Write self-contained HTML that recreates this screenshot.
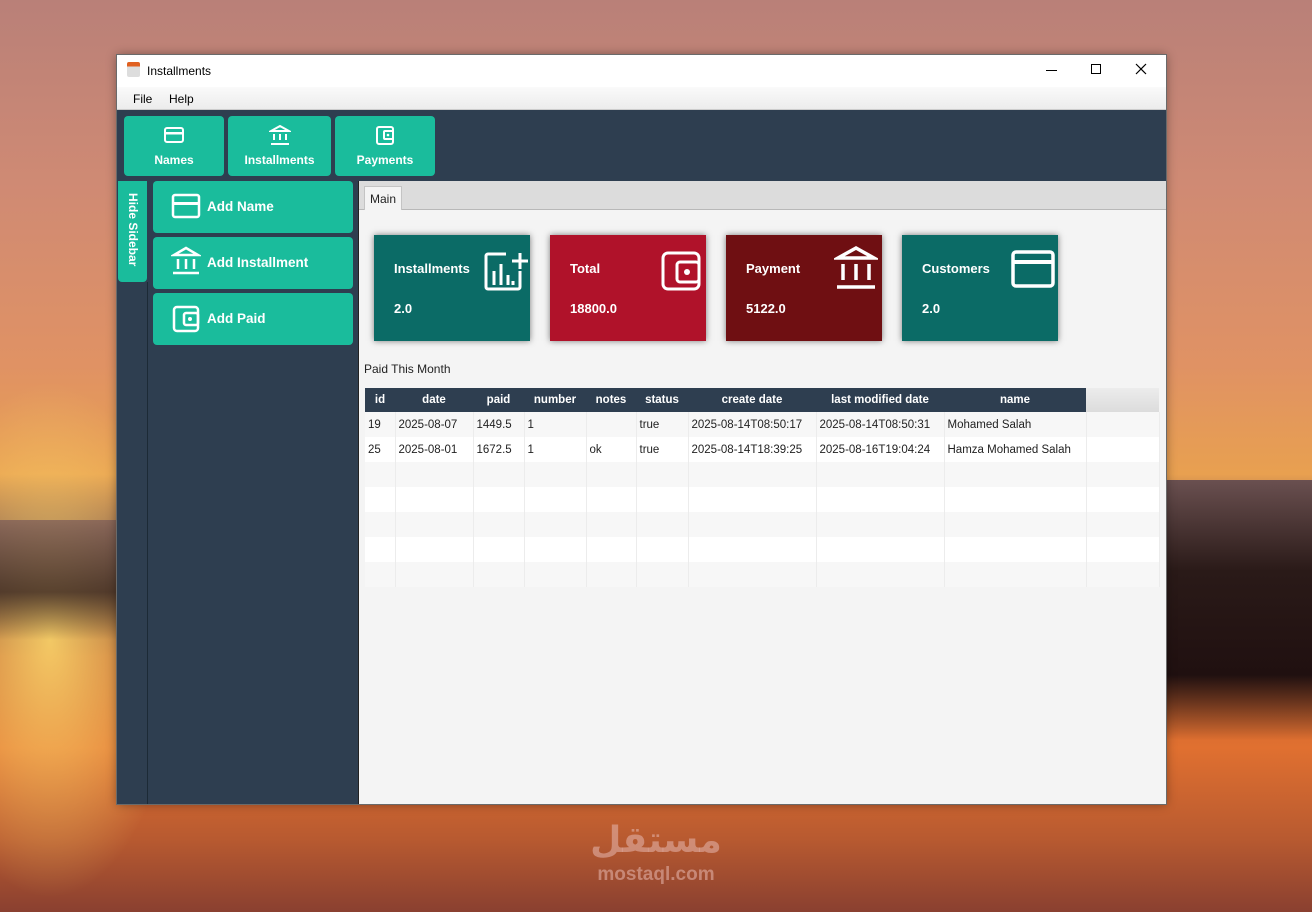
<!DOCTYPE html>
<html><head><meta charset="utf-8"><style>
*{box-sizing:border-box;margin:0;padding:0}
body{width:1312px;height:912px;overflow:hidden;position:relative;font-family:"Liberation Sans",sans-serif;
background:linear-gradient(180deg,#b98078 0%,#cf8a74 20%,#e09264 40%,#e8a050 52%,#8a5a4a 58%,#5a3a30 64%,#c06030 72%,#e07030 82%,#b85a30 92%,#8a4030 100%);}
.glowL{position:absolute;left:-80px;top:380px;width:260px;height:520px;background:radial-gradient(ellipse,rgba(255,220,110,.85),rgba(255,200,90,0) 70%)}
.mtR{position:absolute;left:1165px;top:480px;width:147px;height:260px;background:linear-gradient(180deg,#6a5050,#2a1a18 35%,#201010 75%,rgba(40,20,10,0))}
.mtL{position:absolute;left:0;top:520px;width:117px;height:120px;background:linear-gradient(180deg,rgba(120,90,90,.7),rgba(60,40,35,.8) 60%,rgba(60,40,35,0))}
.win{position:absolute;left:117px;top:55px;width:1049px;height:749px;background:#fff;box-shadow:0 0 0 1px #6a6a6a,0 0 10px rgba(0,0,0,.4)}
.title{position:absolute;left:0;top:0;width:100%;height:32px;background:#fff;font-size:12px;color:#000}
.menu{position:absolute;left:0;top:32px;width:100%;height:23px;background:linear-gradient(#fafafa,#ececec);font-size:12px;border-bottom:1px solid #ccc}
.menu span{position:absolute;top:5px}
.tool{position:absolute;left:0;top:55px;width:100%;height:71px;background:#2e3e50}
.tb{position:absolute;top:6px;height:60px;background:#1abc9c;border-radius:4px;color:#fff;font-weight:bold;font-size:12px;text-align:center}
.tb svg{position:absolute;top:9px;left:50%;margin-left:-11px}
.tb span{position:absolute;top:37px;left:0;width:100%}
.side{position:absolute;left:0;top:126px;width:241px;height:623px;background:#2e3e50}
.hide{position:absolute;left:1px;top:0;width:29px;height:101px;background:#1abc9c;border-radius:0 0 4px 4px;color:#fff;font-weight:bold;font-size:12px}
.hide span{position:absolute;left:8px;top:12px;writing-mode:vertical-rl;}
.vline{position:absolute;left:30px;top:101px;width:1px;height:522px;background:#1c2a36}
.sb{position:absolute;left:36px;width:200px;height:52px;background:#1abc9c;border-radius:4px;color:#fff;font-weight:bold;font-size:13.5px}
.sb svg{position:absolute;left:18px;top:12px}
.sb span{position:absolute;left:54px;top:18px}
.content{position:absolute;left:241px;top:126px;width:808px;height:623px;background:#f4f4f4;border-left:1px solid #222}
.tabs{position:absolute;left:0;top:0;width:100%;height:29px;background:#dcdcdc;border-bottom:1px solid #b8b8b8}
.tab{position:absolute;left:5px;top:5px;width:38px;height:24px;background:#f4f4f4;border:1px solid #c4c4c4;border-bottom:none;font-size:12px;padding:5px 0 0 5px;color:#222}
.card{position:absolute;top:54px;width:156px;height:106px;color:#fff;font-weight:bold;box-shadow:0 0 6px rgba(0,0,0,.5)}
.card .t{position:absolute;left:20px;top:26px;font-size:13px}
.card .v{position:absolute;left:20px;top:66px;font-size:13px}
.card svg{position:absolute}
.lbl{position:absolute;left:5px;top:181px;font-size:12px;color:#222}
table{position:absolute;left:6px;top:207px;border-collapse:collapse;font-size:11.5px;width:794px;table-layout:fixed}
th{background:#2e3e50;color:#fff;height:24px;font-weight:bold;text-align:center;font-size:11.5px}
th.f{background:linear-gradient(#ececec,#dcdcdc)}
td{height:25px;border-right:1px solid #ececec;padding-left:3px;color:#222;white-space:nowrap;overflow:hidden}
tr:nth-child(odd) td{background:#fff}
tr:nth-child(even) td{background:#f7f7f7}
.wm{position:absolute;left:576px;top:818px;color:rgba(225,175,165,.6);font-weight:bold;text-align:center;width:160px}
</style></head><body>
<div class="glowL"></div><div class="mtR"></div><div class="mtL"></div>
<div class="wm"><div style="font-size:36px;font-family:'DejaVu Sans',sans-serif;line-height:46px">مستقل</div><div style="font-size:19px">mostaql.com</div></div>
<div class="win">
<div class="title">
<div style="position:absolute;left:10px;top:7px;width:13px;height:15px;background:linear-gradient(#e06020 0 30%,#ddd 30%);border-radius:2px"></div>
<span style="position:absolute;left:30px;top:9px">Installments</span>
<div style="position:absolute;left:929px;top:15px;width:11px;height:1px;background:#000"></div>
<div style="position:absolute;left:974px;top:9px;width:10px;height:10px;border:1px solid #000"></div>
<svg style="position:absolute;left:1018px;top:8px" width="12" height="12"><path d="M1 1L11 11M11 1L1 11" stroke="#000" stroke-width="1.2"/></svg>
</div>
<div class="menu"><span style="left:16px">File</span><span style="left:52px">Help</span></div>
<div class="tool">
<div class="tb" style="left:7px;width:100px"><svg width="22" height="20" viewBox="0 0 22 20"><rect x="2" y="3" width="18" height="14" rx="2" fill="none" stroke="#fff" stroke-width="2"/><rect x="2" y="7" width="18" height="2.5" fill="#fff"/></svg><span>Names</span></div>
<div class="tb" style="left:111px;width:103px"><svg width="22" height="22" viewBox="0 0 22 22"><path d="M11 1L2 6H20Z" fill="none" stroke="#fff" stroke-width="2"/><path d="M5 9V15M11 9V15M17 9V15" stroke="#fff" stroke-width="2"/><path d="M2 19H20" stroke="#fff" stroke-width="2"/></svg><span>Installments</span></div>
<div class="tb" style="left:218px;width:100px"><svg width="22" height="22" viewBox="0 0 22 22"><rect x="3" y="2" width="16" height="17" rx="2" fill="none" stroke="#fff" stroke-width="2"/><rect x="10" y="6" width="9" height="8" rx="1" fill="none" stroke="#fff" stroke-width="2"/><circle cx="14" cy="10" r="1.3" fill="#fff"/></svg><span>Payments</span></div>
</div>
<div class="side">
<div class="hide"><span>Hide Sidebar</span></div>
<div class="vline"></div>
<div class="sb" style="top:0"><svg width="30" height="26" viewBox="0 0 30 26"><rect x="2" y="2" width="26" height="22" rx="2" fill="none" stroke="#fff" stroke-width="2.5"/><rect x="2" y="9" width="26" height="3" fill="#fff"/></svg><span>Add Name</span></div>
<div class="sb" style="top:56px"><svg width="30" height="30" viewBox="0 0 30 30" style="top:9px"><path d="M15 2L3 9H27Z" fill="none" stroke="#fff" stroke-width="2.5"/><path d="M7 13V23M15 13V23M23 13V23" stroke="#fff" stroke-width="2.5"/><path d="M2 27H28" stroke="#fff" stroke-width="2.5"/></svg><span>Add Installment</span></div>
<div class="sb" style="top:112px"><svg width="30" height="28" viewBox="0 0 30 28"><rect x="3" y="2" width="24" height="24" rx="3" fill="none" stroke="#fff" stroke-width="2.5"/><rect x="13" y="8" width="14" height="12" rx="2" fill="none" stroke="#fff" stroke-width="2.5"/><circle cx="19" cy="14" r="2" fill="#fff"/></svg><span>Add Paid</span></div>
</div>
<div class="content">
<div class="tabs"><div class="tab">Main</div></div>
<div class="card" style="left:15px;background:#0b6b66"><div class="t">Installments</div><div class="v">2.0</div>
<svg style="left:110px;top:16px" width="46" height="40" viewBox="0 0 46 40"><path d="M22 3H4a2 2 0 0 0-2 2v31a2 2 0 0 0 2 2h30a2 2 0 0 0 2-2V20" fill="none" stroke="#fff" stroke-width="3"/><path d="M10 34V20M17 34V13M24 34V24M29 34V30" stroke="#fff" stroke-width="3"/><path d="M36 2V18M28 10H44" stroke="#fff" stroke-width="3"/></svg></div>
<div class="card" style="left:191px;background:#b0122a"><div class="t">Total</div><div class="v">18800.0</div>
<svg style="left:110px;top:15px" width="42" height="42" viewBox="0 0 42 42"><rect x="3" y="3" width="36" height="36" rx="5" fill="none" stroke="#fff" stroke-width="3"/><rect x="17" y="12" width="22" height="20" rx="3" fill="none" stroke="#fff" stroke-width="3"/><circle cx="27" cy="22" r="3" fill="#fff"/></svg></div>
<div class="card" style="left:367px;background:#6f0f12"><div class="t">Payment</div><div class="v">5122.0</div>
<svg style="left:108px;top:10px" width="44" height="46" viewBox="0 0 44 46"><path d="M22 3L4 13H40Z" fill="none" stroke="#fff" stroke-width="3.5"/><path d="M9 19V35M22 19V35M35 19V35" stroke="#fff" stroke-width="3.5"/><path d="M3 42H41" stroke="#fff" stroke-width="3.5"/></svg></div>
<div class="card" style="left:543px;background:#0b6b66"><div class="t">Customers</div><div class="v">2.0</div>
<svg style="left:108px;top:14px" width="46" height="40" viewBox="0 0 46 40"><rect x="3" y="3" width="40" height="34" rx="3" fill="none" stroke="#fff" stroke-width="3.5"/><rect x="3" y="11" width="40" height="4" fill="#fff"/></svg></div>
<div class="lbl">Paid This Month</div>
<table>
<colgroup><col style="width:30px"><col style="width:78px"><col style="width:51px"><col style="width:62px"><col style="width:50px"><col style="width:52px"><col style="width:128px"><col style="width:128px"><col style="width:142px"><col style="width:73px"></colgroup>
<tr><th>id</th><th>date</th><th>paid</th><th>number</th><th>notes</th><th>status</th><th>create date</th><th>last modified date</th><th>name</th><th class="f"></th></tr>
<tr><td>19</td><td>2025-08-07</td><td>1449.5</td><td>1</td><td></td><td>true</td><td>2025-08-14T08:50:17</td><td>2025-08-14T08:50:31</td><td>Mohamed Salah</td><td></td></tr>
<tr><td>25</td><td>2025-08-01</td><td>1672.5</td><td>1</td><td>ok</td><td>true</td><td>2025-08-14T18:39:25</td><td>2025-08-16T19:04:24</td><td>Hamza Mohamed Salah</td><td></td></tr>
<tr><td></td><td></td><td></td><td></td><td></td><td></td><td></td><td></td><td></td><td></td></tr>
<tr><td></td><td></td><td></td><td></td><td></td><td></td><td></td><td></td><td></td><td></td></tr>
<tr><td></td><td></td><td></td><td></td><td></td><td></td><td></td><td></td><td></td><td></td></tr>
<tr><td></td><td></td><td></td><td></td><td></td><td></td><td></td><td></td><td></td><td></td></tr>
<tr><td></td><td></td><td></td><td></td><td></td><td></td><td></td><td></td><td></td><td></td></tr>
</table>
</div>
</div>
</body></html>
